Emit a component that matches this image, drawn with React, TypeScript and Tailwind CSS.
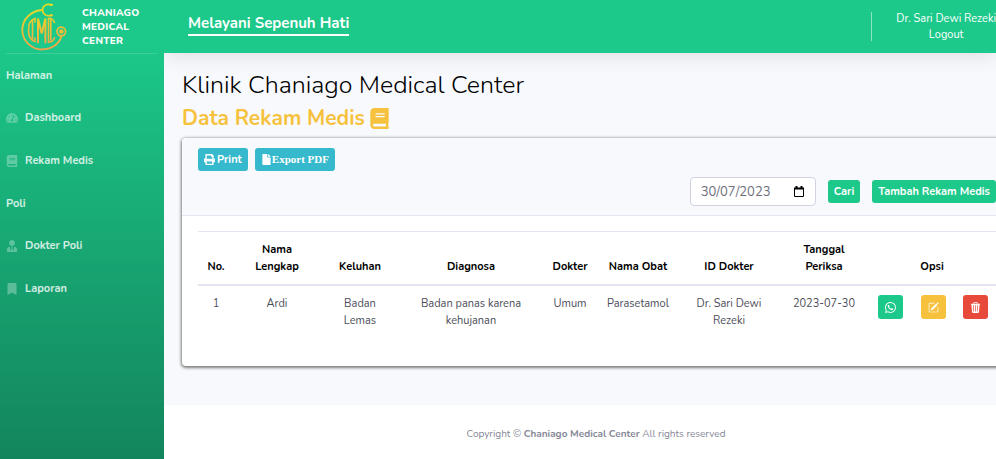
import React from "react";
import { FaTachometerAlt, FaBook, FaUserTie, FaBookmark, FaPrint, FaFile } from "react-icons/fa";
import { BsPencilSquare, BsTrash3Fill, BsWhatsapp } from "react-icons/bs";

const nav = [
  { title: "Halaman", items: [{ label: "Dashboard", Icon: FaTachometerAlt }, { label: "Rekam Medis", Icon: FaBook }] },
  { title: "Poli", items: [{ label: "Dokter Poli", Icon: FaUserTie }, { label: "Laporan", Icon: FaBookmark }] },
];

const columns = [
  { label: "No.", width: "w-[36px]" },
  { label: "Nama Lengkap", width: "w-[86px]" },
  { label: "Keluhan", width: "w-[80px]" },
  { label: "Diagnosa", width: "w-[142px]" },
  { label: "Dokter", width: "w-[56px]" },
  { label: "Nama Obat", width: "w-[80px]" },
  { label: "ID Dokter", width: "w-[102px]" },
  { label: "Tanggal Periksa", width: "w-[88px]" },
  { label: "Opsi", width: "w-[128px]" },
];

const rows = [["1", "Ardi", "Badan Lemas", "Badan panas karena kehujanan", "Umum", "Parasetamol", "Dr. Sari Dewi Rezeki", "2023-07-30"]];

function Logo() {
  return (
    <svg viewBox="0 0 48 50" className="h-[50px] w-12 shrink-0" fill="none" aria-hidden="true">
      <defs>
        <linearGradient id="gold" x1="0" y1="0" x2="0" y2="50" gradientUnits="userSpaceOnUse">
          <stop stopColor="#e4e321" />
          <stop offset="0.6" stopColor="#ecbd3a" />
          <stop offset="1" stopColor="#f0a050" />
        </linearGradient>
      </defs>
      <g stroke="url(#gold)" strokeLinecap="round">
        <path d="M22.500 8C11 8.500 2.300 17.500 2.300 28s8.700 19.500 19.500 19.500c9.500 0 17.500-5.500 19.500-13" strokeWidth="1.800" />
        <path d="M31 2.800c-4.500-1.500-8.500 1.200-8.500 5.200s4 7 8.500 5.200" strokeWidth="1.600" />
        <path d="M30.500 2.800h1.500M30.500 13.300h1.500" strokeWidth="2.200" />
        <circle cx="41.300" cy="29.500" r="4.300" strokeWidth="1.700" />
        <path d="M15 20v-3.500C11 17.500 8.500 22 8.500 28s2.500 10.500 6.500 11.500V36M12.500 19v18" strokeWidth="1.600" />
        <path d="M18 40.500V16.500l3.700 15 3.700-15v24" strokeWidth="2" />
        <path d="M34.500 20.500c-1-3-3-4.300-6-4.300v24c3 0 5-1.500 6-4.500M30.800 18v20" strokeWidth="1.600" />
      </g>
      <circle cx="41.300" cy="29.500" r="2.300" fill="url(#gold)" />
    </svg>
  );
}

export default function App() {
  return (
    <div className="flex min-h-screen overflow-hidden bg-[#f8f9fc] font-['Nunito','Open_Sans',sans-serif] text-[11px] text-[#4b4d59]">
      <aside className="relative z-10 w-[164px] shrink-0 bg-linear-to-b from-[#1cc88a] from-10% to-[#13855c] px-1.5 text-white">
        <a href="#home" className="flex h-[53px] items-center gap-3.5 pl-3.5 text-[10px] leading-[14px] font-extrabold tracking-wide uppercase">
          <Logo />
          <span>Chaniago<br />Medical<br />Center</span>
        </a>
        <hr className="border-white/15" />
        <nav className="text-[11px] font-bold text-white/80">
          {nav.map(({ title, items }) => (
            <section key={title}>
              <h2 className="flex h-[42px] items-center pt-0.5">{title}</h2>
              {items.map(({ label, Icon }) => (
                <a key={label} href="#menu" className="flex h-[43px] items-center gap-[7px]">
                  <Icon className="size-3 text-white/30" />
                  <span className="pt-0.5">{label}</span>
                </a>
              ))}
            </section>
          ))}
        </nav>
      </aside>
      <div className="flex min-w-0 flex-1 flex-col">
        <header className="flex h-[53px] shrink-0 items-center justify-between bg-[#1cc88a] pl-6 text-white shadow-[0_2px_20px_rgba(58,59,69,0.15)]">
          <p className="mt-[-6px] border-b-2 border-white text-[15px] leading-[22px] font-bold">Melayani Sepenuh Hati</p>
          <div className="flex items-center gap-6">
            <span className="h-[29px] w-px bg-white/50" />
            <div className="text-center text-[11px] leading-4">
              <p>Dr. Sari Dewi Rezeki</p>
              <a href="#logout">Logout</a>
            </div>
          </div>
        </header>
        <main className="flex-1 overflow-hidden pt-[14px] pb-[39px] pl-[18px]">
          <h1 className="text-[25px] leading-9 font-light text-black">Klinik Chaniago Medical Center</h1>
          <h2 className="flex h-[30px] items-center gap-1 text-[21px] font-bold text-[#f6c23e]">
            <span className="pt-0.5">Data Rekam Medis</span>
            <FaBook className="size-[21px]" />
          </h2>
          <section className="mt-[5px] -mr-4 min-h-[228px] rounded bg-white shadow-[0_1px_3px_1px_rgba(0,0,0,0.5)]">
            <div className="rounded-t border-b border-[#e3e6f0] bg-[#f8f9fc] px-4 pt-2.5 pb-[9px]">
              <div className="flex gap-[7px] font-bold text-white">
                <button className="flex h-[23px] items-center gap-0.5 rounded-[3px] bg-[#36b9cc] px-1.5"><FaPrint /><span className="pt-0.5">Print</span></button>
                <button className="flex h-[23px] items-center rounded-[3px] bg-[#36b9cc] px-1.5 font-['Liberation_Serif',serif] text-[11px]"><FaFile /> Export PDF</button>
              </div>
              <form className="mt-1.5 flex items-center justify-end" onSubmit={(e) => e.preventDefault()}>
                <label className="flex h-[29px] w-[126px] items-center rounded border border-[#d1d3e2] bg-white px-2.5">
                  <input aria-label="Tanggal" defaultValue="30/07/2023" className="w-full min-w-0 pt-0.5 text-[13px] text-[#6e707e] outline-none" />
                  <svg viewBox="0 0 12 12" className="size-3 shrink-0" fill="none" stroke="#000" aria-hidden="true"><path d="M1.500 2.500h9v8h-9z" /><path d="M1 2.500h10M3.500 0v2M8.500 0v2" strokeWidth="2" /></svg>
                </label>
                <button className="ml-3 h-[23px] rounded-[3px] bg-[#1cc88a] px-1.5 pt-0.5 font-bold text-white">Cari</button>
                <button type="button" className="ml-3 h-[23px] rounded-[3px] bg-[#1cc88a] px-1.5 pt-0.5 font-bold text-white">Tambah Rekam Medis</button>
              </form>
            </div>
            <div className="px-4 pt-[15px]">
              <table className="w-full table-fixed border-collapse text-center text-[11px] leading-[17px]">
                <thead>
                  <tr className="border-t border-b-2 border-[#e3e6f0] text-black">
                    {columns.map(({ label, width }) => <th key={label} className={`${width} px-2 pt-[9px] pb-[9px] align-bottom font-bold`}>{label}</th>)}
                  </tr>
                </thead>
                <tbody>
                  {rows.map((row) => (
                    <tr key={row[0]} className="align-top">
                      {row.map((cell) => <td key={cell} className="px-2 pt-[9px]">{cell}</td>)}
                      <td className="pt-[9px] pl-2.5">
                        <div className="flex justify-between pr-2 text-white">
                          <button aria-label="WhatsApp" className="flex h-6 w-[25px] items-center justify-center rounded-[3px] bg-[#1cc88a]"><BsWhatsapp className="size-[11px]" /></button>
                          <button aria-label="Edit" className="flex h-6 w-[25px] items-center justify-center rounded-[3px] bg-[#f6c23e]"><BsPencilSquare className="size-[11px]" /></button>
                          <button aria-label="Hapus" className="flex h-6 w-[25px] items-center justify-center rounded-[3px] bg-[#e74a3b]"><BsTrash3Fill className="size-[11px]" /></button>
                        </div>
                      </td>
                    </tr>
                  ))}
                </tbody>
              </table>
            </div>
          </section>
        </main>
        <footer className="flex h-[54px] items-center justify-center bg-white pt-1 text-[10px] text-[#858796]">
          <p className="ml-8">Copyright © <strong className="font-bold">Chaniago Medical Center</strong> All rights reserved</p>
        </footer>
      </div>
    </div>
  );
}
